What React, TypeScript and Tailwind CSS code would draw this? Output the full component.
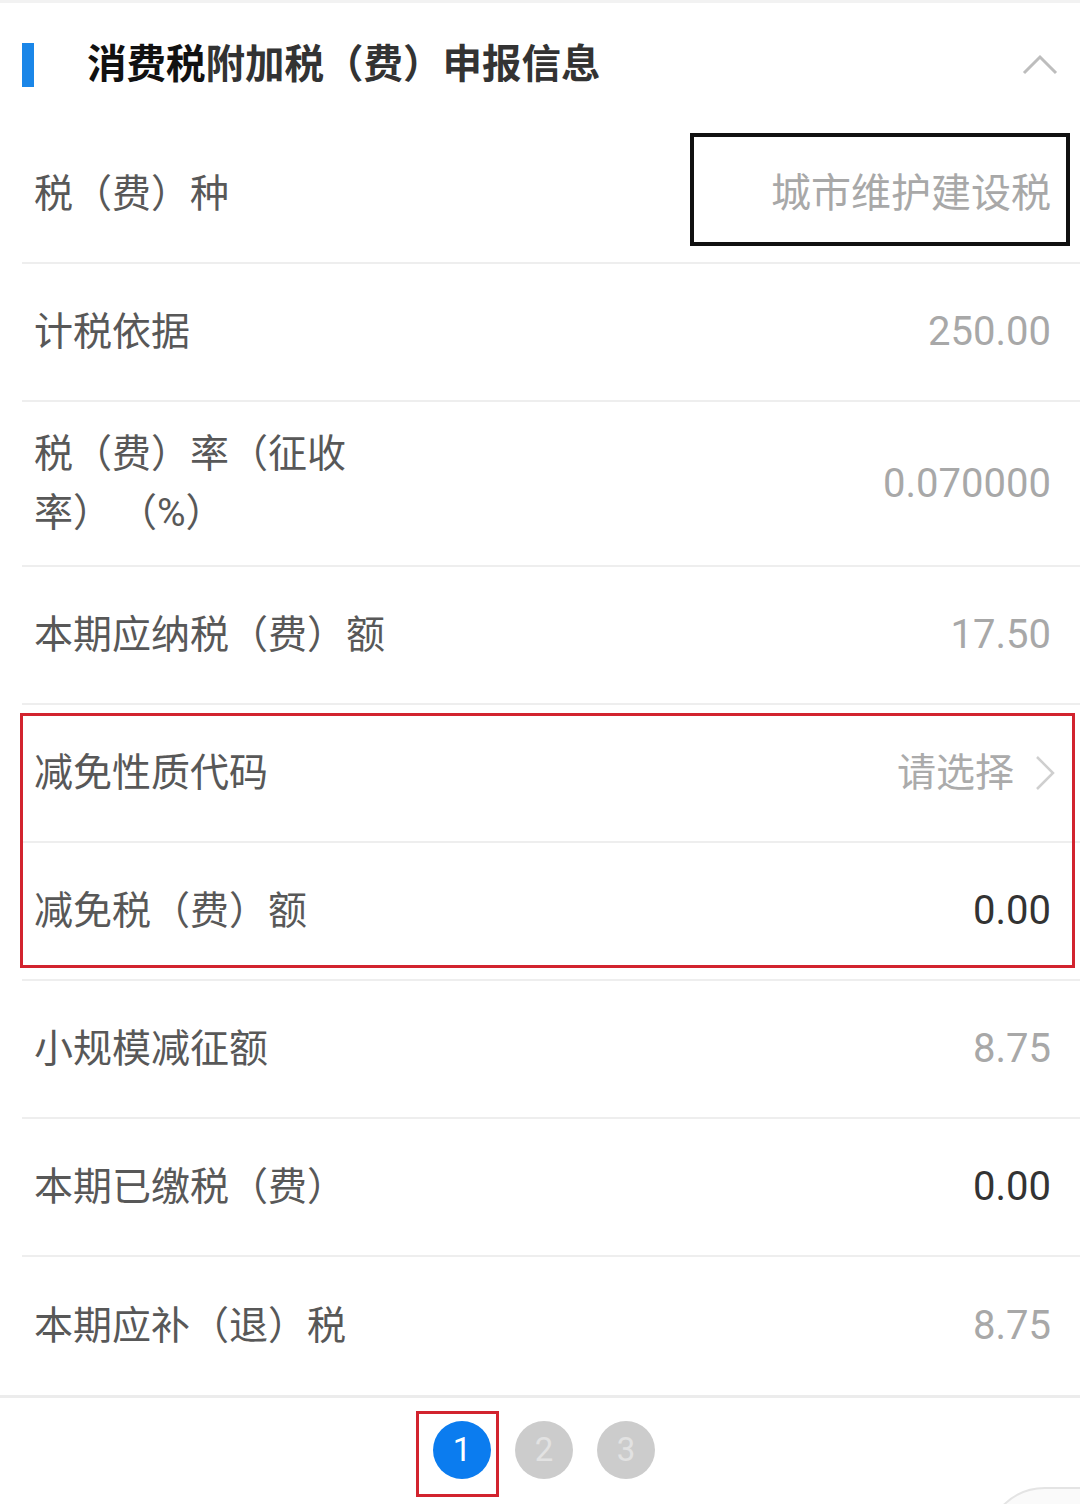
import React from "react";

const FONT = { fontFamily: 'Roboto, "Noto Sans CJK SC", "Noto Sans", sans-serif' };

function Row({
  label,
  value,
  valueClass = "text-[#a8a8a8]",
  tall = false,
  children,
  noBorder = false,
}: {
  label: React.ReactNode;
  value?: React.ReactNode;
  valueClass?: string;
  tall?: boolean;
  children?: React.ReactNode;
  noBorder?: boolean;
}) {
  return (
    <div
      className={`relative ml-[22px] flex items-center justify-between pl-[12px] pr-[29px] ${
        tall ? "h-[165px]" : "h-[138px]"
      } ${noBorder ? "" : "border-b-2 border-[#eeeeee]"}`}
    >
      <div className="text-[39px] leading-[59px] text-[#585858]">{label}</div>
      <div className={`text-[40px] leading-none ${valueClass}`}>{value}</div>
      {children}
    </div>
  );
}

export default function App() {
  return (
    <div className="relative h-[1504px] w-[1080px] overflow-hidden bg-white" style={FONT}>
      <div className="h-[3px] bg-[#f2f2f2]" />
      {/* header */}
      <div className="flex h-[123px] items-center justify-between pl-[22px] pr-[22px]">
        <div className="flex items-center">
          <div className="h-[44px] w-[12px] bg-[#1a86e8]" />
          <div className="ml-[53px] text-[39.5px] font-bold leading-none text-[#333333]">
            <span className="text-[#111111]">消费税</span>附加税（费）申报信息
          </div>
        </div>
        <svg width="36" height="22" viewBox="0 0 36 22" className="mb-[2px]">
          <polyline points="2,20 18,4 34,20" fill="none" stroke="#bdbdbd" strokeWidth="3" />
        </svg>
      </div>

      <Row label="税（费）种" value="城市维护建设税" valueClass="text-[#a8a8a8] text-[39px]">
        <div className="pointer-events-none absolute right-[10px] top-[7px] h-[113px] w-[380px] border-[4px] border-[#111111]" />
      </Row>
      <Row label="计税依据" value="250.00" />
      <Row
        tall
        label={
          <div className="flex w-[340px] flex-col">
            <span>税（费）率（征收</span>
            <span className="flex">
              <span>率）</span>
              <span className="ml-[6px]">（%）</span>
            </span>
          </div>
        }
        value="0.070000"
      />
      <Row label="本期应纳税（费）额" value="17.50" />

      <div className="relative">
        <Row
          label="减免性质代码"
          value={
            <div className="flex items-center text-[39px] text-[#ababab]">
              请选择
              <svg width="22" height="38" viewBox="0 0 22 38" className="ml-[20px] mr-[-5px]">
                <polyline points="3,3 19,19 3,35" fill="none" stroke="#cfcfcf" strokeWidth="2.5" />
              </svg>
            </div>
          }
        />
        <Row label="减免税（费）额" value="0.00" valueClass="text-[#333333]" />
        <div className="pointer-events-none absolute left-[20px] top-[8px] h-[255px] w-[1055px] border-[3px] border-[#d2232e]" />
      </div>

      <Row label="小规模减征额" value="8.75" />
      <Row label="本期已缴税（费）" value="0.00" valueClass="text-[#333333]" />
      <Row label="本期应补（退）税" value="8.75" noBorder />
      <div className="h-[3px] bg-[#ececec]" />

      {/* pagination */}
      <div className="flex justify-center pt-[23px]">
        <div className="ml-[8px] flex items-center gap-[24px]">
          <div className="relative flex h-[58px] w-[58px] items-center justify-center rounded-full bg-[#0b7cef] text-[33px] text-white">
            1
            <div className="pointer-events-none absolute left-[-17px] top-[-10px] h-[86px] w-[83px] border-[3px] border-[#d2232e]" />
          </div>
          <div className="flex h-[58px] w-[58px] items-center justify-center rounded-full bg-[#cccccc] text-[33px] text-[#e2e2e2]">
            2
          </div>
          <div className="flex h-[58px] w-[58px] items-center justify-center rounded-full bg-[#cccccc] text-[33px] text-[#e2e2e2]">
            3
          </div>
        </div>
      </div>

      <div className="absolute left-[985px] top-[1487px] h-[120px] w-[200px] rounded-[60px] border-[2px] border-[#e4e4e4] bg-[#fafafa]" />
    </div>
  );
}
